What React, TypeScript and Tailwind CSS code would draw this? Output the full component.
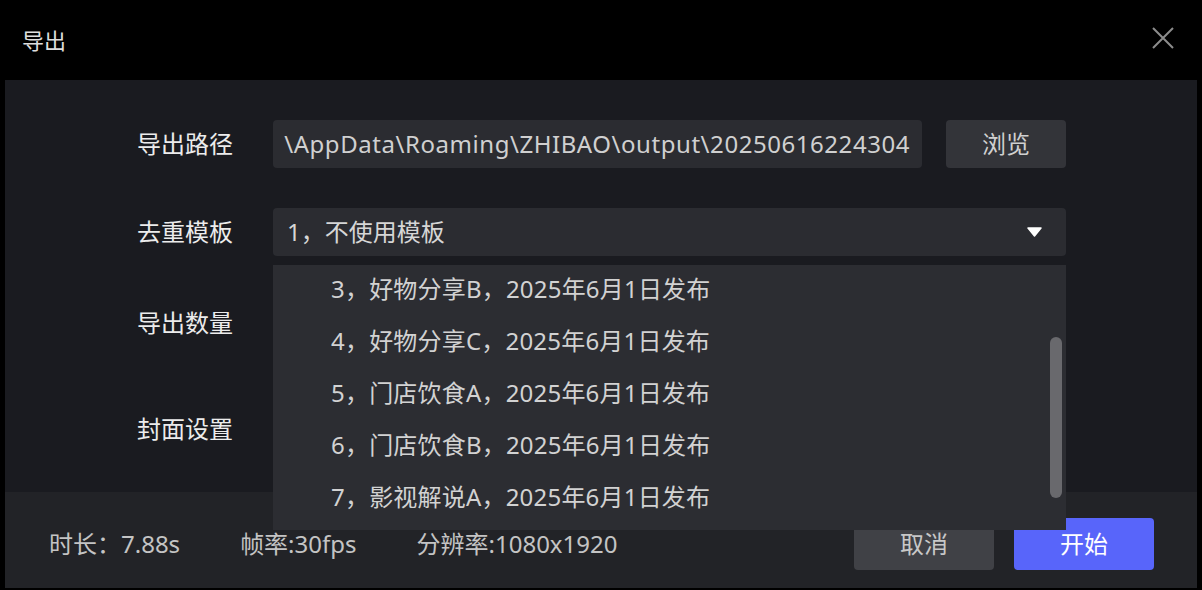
import { useEffect, useRef } from 'react';

const TEMPLATES = [
  '1，不使用模板',
  '2，好物分享A，2025年6月1日发布',
  '3，好物分享B，2025年6月1日发布',
  '4，好物分享C，2025年6月1日发布',
  '5，门店饮食A，2025年6月1日发布',
  '6，门店饮食B，2025年6月1日发布',
  '7，影视解说A，2025年6月1日发布',
  '8，影视解说B，2025年6月1日发布',
];

const FONT = "font-['Noto_Sans','Noto_Sans_CJK_SC',sans-serif]";

function Label({ children }: { children: string }) {
  return <div className="w-[136px] shrink-0 text-[24px] leading-none text-[#ececec]">{children}</div>;
}

function TemplateList() {
  const ref = useRef<HTMLDivElement>(null);

  useEffect(() => {
    if (ref.current) ref.current.scrollTop = 106;
  }, []);

  return (
    <div className="absolute left-0 top-[57px] z-10 h-[265px] w-full bg-[#2c2d32]">
      <div ref={ref} className="h-full overflow-hidden">
        {TEMPLATES.map((t) => (
          <div key={t} className="flex h-[52px] items-center pl-[58px] text-[24px] tracking-[0.2px] text-[#d2d2d2]">
            {t}
          </div>
        ))}
      </div>
      <div className="absolute right-[4px] top-[72px] h-[161px] w-[12px] rounded-full bg-[#69696d]" />
    </div>
  );
}

export default function App() {
  return (
    <div className={`flex h-[590px] w-[1202px] flex-col bg-black ${FONT}`}>
      <div className="flex h-[80px] items-center justify-between pl-[22px] pr-[28px]">
        <span className="text-[22px] text-[#dedede]">导出</span>
        <svg width="22" height="22" viewBox="0 0 22 22" className="mt-[-4px]">
          <path d="M1 1 L21 21 M21 1 L1 21" stroke="#8c8c8c" strokeWidth="2" />
        </svg>
      </div>

      <div className="flex flex-col px-[5px]">
        <div className="relative h-[412px] bg-[#1a1b20] pl-[132px] pt-[40px]">
          <div className="flex h-[48px] items-center">
            <Label>导出路径</Label>
            <div className="flex h-full w-[649px] items-center justify-end overflow-hidden whitespace-nowrap rounded-[4px] bg-[#2b2c31] pr-[12px] text-[24px] tracking-[0.55px] text-[#d0d0d0]">
              \AppData\Roaming\ZHIBAO\output\20250616224304
            </div>
            <button
              type="button"
              className="ml-[24px] h-full w-[120px] rounded-[4px] bg-[#333439] text-[24px] text-[#d0d0d0]"
            >
              浏览
            </button>
          </div>

          <div className="mt-[40px] flex h-[48px] items-center">
            <Label>去重模板</Label>
            <div className="relative h-full w-[793px]">
              <div className="flex h-full items-center justify-between rounded-[4px] bg-[#2b2c31] pl-[14px] pr-[24px] text-[24px] text-[#d6d6d6]">
                <span>1，不使用模板</span>
                <svg width="15" height="10" viewBox="0 0 15 10">
                  <path d="M1 1 L14 1 L7.5 9 Z" fill="#ffffff" stroke="#ffffff" strokeWidth="1.5" strokeLinejoin="round" />
                </svg>
              </div>
              <TemplateList />
            </div>
          </div>

          <div className="mt-[43px] flex h-[48px] items-center">
            <Label>导出数量</Label>
          </div>

          <div className="mt-[58px] flex h-[48px] items-center">
            <Label>封面设置</Label>
          </div>
        </div>

        <div className="flex h-[96px] items-center justify-between bg-[#222327] pl-[44px] pr-[43px] pt-[8px]">
          <div className="flex gap-[60px] text-[24px] text-[#c4c4c4]">
            <span>时长：7.88s</span>
            <span>帧率:30fps</span>
            <span>分辨率:1080x1920</span>
          </div>
          <div className="flex gap-[20px]">
            <button type="button" className="h-[52px] w-[140px] rounded-[4px] bg-[#404146] text-[24px] text-[#c8c8c8]">
              取消
            </button>
            <button type="button" className="h-[52px] w-[140px] rounded-[4px] bg-[#5865fa] text-[24px] text-white">
              开始
            </button>
          </div>
        </div>
      </div>
    </div>
  );
}
